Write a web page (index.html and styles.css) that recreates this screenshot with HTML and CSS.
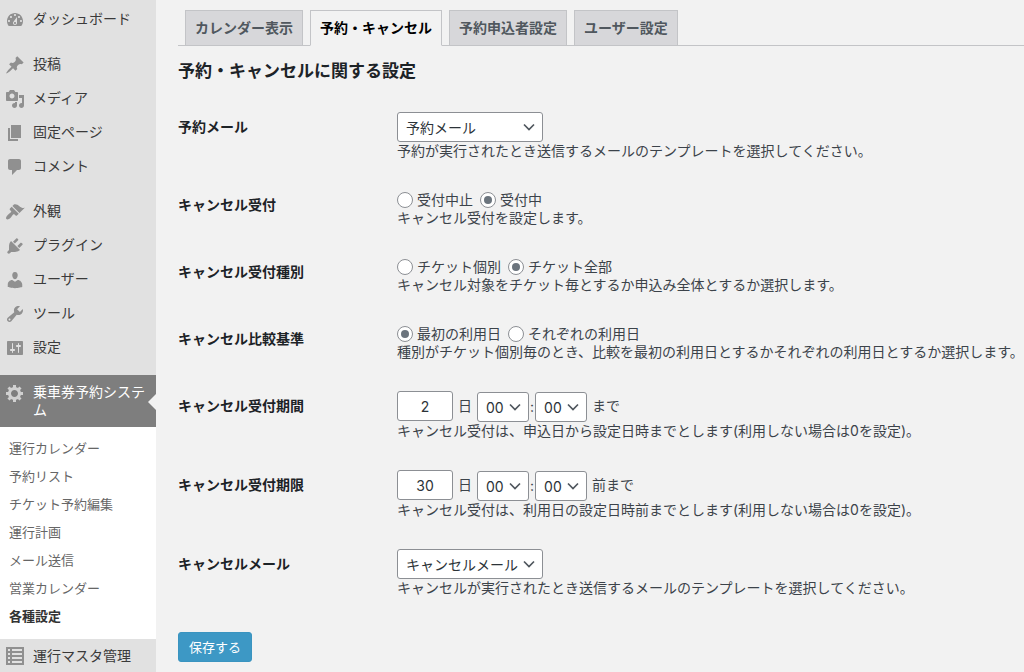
FILE: index.html
```
<!DOCTYPE html>
<html lang="ja">
<head>
    <meta charset="UTF-8">
    <title>各種設定</title>
    <link rel="stylesheet" href="styles.css">
</head>
<body>
    <div class="wrap">
        <nav class="sidebar">
            <ul class="menu">
                <li>
                    <a class="menu_link" href="#"><svg class="icon" viewBox="0 0 20 20"><path fill-rule="evenodd" d="M3.76 16h12.48c1.1-1.37 1.76-3.11 1.76-5 0-4.42-3.58-8-8-8s-8 3.58-8 8c0 1.89.66 3.63 1.76 5zM10 4c.55 0 1 .45 1 1s-.45 1-1 1-1-.45-1-1 .45-1 1-1zM6 6c.55 0 1 .45 1 1s-.45 1-1 1-1-.45-1-1 .45-1 1-1zm8 0c.55 0 1 .45 1 1s-.45 1-1 1-1-.45-1-1 .45-1 1-1zm-5.37 5.55L12 7v6c0 1.1-.9 2-2 2s-2-.9-2-2c0-.57.24-1.08.63-1.45zM4 10c.55 0 1 .45 1 1s-.45 1-1 1-1-.45-1-1 .45-1 1-1zm12 0c.55 0 1 .45 1 1s-.45 1-1 1-1-.45-1-1 .45-1 1-1zm-5 3c0-.55-.45-1-1-1s-1 .45-1 1 .45 1 1 1 1-.45 1-1z"/></svg>ダッシュボード</a>
                </li>
                <li class="group">
                    <a class="menu_link" href="#"><svg class="icon" viewBox="0 0 20 20"><path d="M10.44 3.02l1.82-1.82 6.36 6.35-1.83 1.82c-1.05-.68-2.48-.57-3.41.36l-.75.75c-.92.93-1.04 2.35-.35 3.41l-1.83 1.82-2.41-2.41-2.8 2.79c-.42.42-3.38 2.71-3.8 2.29s1.86-3.39 2.28-3.81l2.79-2.79L4.1 9.36l1.83-1.82c1.05.69 2.48.57 3.4-.36l.75-.75c.93-.92 1.05-2.35.36-3.41z"/></svg>投稿</a>
                </li>
                <li>
                    <a class="menu_link" href="#"><svg class="icon" viewBox="0 0 20 20"><path fill-rule="evenodd" d="M13 11V4c0-.55-.45-1-1-1h-1.67L9 1H5L3.67 3H2c-.55 0-1 .45-1 1v7c0 .55.45 1 1 1h10c.55 0 1-.45 1-1zM7 4.5c1.38 0 2.5 1.12 2.5 2.5S8.38 9.5 7 9.5 4.5 8.38 4.5 7 5.62 4.5 7 4.5zM14 6h5v10.5c0 1.38-1.12 2.5-2.5 2.5S14 17.88 14 16.5s1.12-2.5 2.5-2.5c.17 0 .34.02.5.05V9h-3V6zm-4 8.05V13h2v3.5c0 1.38-1.12 2.5-2.5 2.5S7 17.88 7 16.5 8.12 14 9.5 14c.17 0 .34.02.5.05z"/></svg>メディア</a>
                </li>
                <li>
                    <a class="menu_link" href="#"><svg class="icon" viewBox="0 0 20 20"><path d="M6 15V2h10v13H6zm-1 1h8v2H3V5h2v11z"/></svg>固定ページ</a>
                </li>
                <li>
                    <a class="menu_link" href="#"><svg class="icon" viewBox="0 0 20 20"><path d="M5 2h9c1.1 0 2 .9 2 2v7c0 1.1-.9 2-2 2h-2l-5 5v-5H5c-1.1 0-2-.9-2-2V4c0-1.1.9-2 2-2z"/></svg>コメント</a>
                </li>
                <li class="group">
                    <a class="menu_link" href="#"><svg class="icon" viewBox="0 0 20 20"><path d="M14.48 11.06L7.41 3.99l1.5-1.5c.5-.56 2.3-.47 3.51.32 1.21.8 1.43 1.28 2.91 2.1 1.18.64 2.45 1.26 4.45.85zm-.71.71L6.7 4.7 4.93 6.47c-.39.39-.39 1.02 0 1.41l1.06 1.06c.39.39.39 1.03 0 1.42-.6.6-1.43 1.11-2.21 1.69-.35.26-.7.53-1.01.84C1.43 14.23.4 16.08 1.4 17.07c.99 1 2.84-.03 4.18-1.36.31-.31.58-.66.85-1.02.57-.78 1.08-1.61 1.69-2.21.39-.39 1.02-.39 1.41 0l1.06 1.06c.39.39 1.02.39 1.41 0z"/></svg>外観</a>
                </li>
                <li>
                    <a class="menu_link" href="#"><svg class="icon" viewBox="0 0 20 20"><path d="M13.11 4.36L9.87 7.6 8 5.73l3.24-3.24c.35-.34 1.05-.2 1.56.32.52.51.66 1.21.31 1.55zm-8 1.77l.91-1.12 9.01 9.01-1.19.84c-.71.71-2.63 1.16-3.82 1.16H6.14L4.9 17.26c-.59.59-1.54.59-2.12 0-.59-.58-.59-1.53 0-2.12l1.24-1.24v-3.88c0-1.13.4-3.19 1.09-3.89zm7.26 3.97l3.24-3.24c.34-.35 1.04-.21 1.55.31.52.51.66 1.21.31 1.55l-3.24 3.25z"/></svg>プラグイン</a>
                </li>
                <li>
                    <a class="menu_link" href="#"><svg class="icon" viewBox="0 0 20 20"><path d="M10 9.25c-2.27 0-2.73-3.44-2.73-3.44C7 4.02 7.82 2 9.97 2c2.16 0 2.98 2.02 2.71 3.81 0 0-.41 3.44-2.68 3.44zm0 2.57L12.72 10c2.39 0 4.52 2.33 4.52 4.53v2.49s-3.65 1.13-7.24 1.13c-3.65 0-7.24-1.13-7.24-1.13v-2.49c0-2.25 1.94-4.48 4.47-4.48z"/></svg>ユーザー</a>
                </li>
                <li>
                    <a class="menu_link" href="#"><svg class="icon" viewBox="0 0 20 20"><path fill-rule="evenodd" d="M16.68 9.77c-1.34 1.34-3.3 1.67-4.95.99l-5.41 6.52c-.99.99-2.59.99-3.58 0s-.99-2.59 0-3.57l6.52-5.42c-.68-1.65-.35-3.61.99-4.95 1.28-1.28 3.12-1.62 4.72-1.06l-2.89 2.89 2.82 2.82 2.86-2.87c.53 1.58.18 3.39-1.08 4.65zM3.81 16.21c.4.39 1.04.39 1.43 0 .4-.4.4-1.04 0-1.43-.39-.4-1.03-.4-1.43 0-.39.39-.39 1.03 0 1.43z"/></svg>ツール</a>
                </li>
                <li>
                    <a class="menu_link" href="#"><svg class="icon" viewBox="0 0 20 20"><path fill-rule="evenodd" d="M18 16V4c0-.55-.45-1-1-1H3c-.55 0-1 .45-1 1v12c0 .55.45 1 1 1h14c.55 0 1-.45 1-1zM8 11h1c.55 0 1 .45 1 1s-.45 1-1 1H8v1.5c0 .28-.22.5-.5.5s-.5-.22-.5-.5V13H6c-.55 0-1-.45-1-1s.45-1 1-1h1V5.5c0-.28.22-.5.5-.5s.5.22.5.5V11zm5-2h-1c-.55 0-1-.45-1-1s.45-1 1-1h1V5.5c0-.28.22-.5.5-.5s.5.22.5.5V7h1c.55 0 1 .45 1 1s-.45 1-1 1h-1v5.5c0 .28-.22.5-.5.5s-.5-.22-.5-.5V9z"/></svg>設定</a>
                </li>
                <li class="group">
                    <a class="menu_link current" href="#"><svg class="icon" viewBox="0 0 20 20"><path fill-rule="evenodd" d="M18 12h-2.18c-.17.7-.44 1.35-.81 1.93l1.54 1.54-2.1 2.1-1.54-1.54c-.58.36-1.23.63-1.91.79V19H8v-2.18c-.68-.16-1.33-.43-1.91-.79l-1.54 1.54-2.12-2.12 1.54-1.54c-.36-.58-.63-1.23-.79-1.91H1V9.03h2.17c.16-.7.44-1.35.8-1.94L2.43 5.55l2.1-2.1 1.54 1.54c.58-.37 1.24-.64 1.93-.81V2h3v2.18c.68.16 1.33.43 1.91.79l1.54-1.54 2.12 2.12-1.54 1.54c.36.59.64 1.24.8 1.94H18V12zm-8.5 2c1.93 0 3.5-1.57 3.5-3.5S11.43 7 9.5 7 6 8.57 6 10.5 7.57 14 9.5 14z"/></svg>乗車券予約システム</a>
                    <ul class="submenu">
                        <li><a href="#">運行カレンダー</a></li>
                        <li><a href="#">予約リスト</a></li>
                        <li><a href="#">チケット予約編集</a></li>
                        <li><a href="#">運行計画</a></li>
                        <li><a href="#">メール送信</a></li>
                        <li><a href="#">営業カレンダー</a></li>
                        <li><a class="active" href="#">各種設定</a></li>
                    </ul>
                </li>
                <li>
                    <a class="menu_link" href="#"><svg class="icon" viewBox="0 0 20 20"><path fill-rule="evenodd" d="M1 0h18v18H1zM3 2v2h2V2zM7 2v2h10V2zM3 6v2h2V6zM7 6v2h10V6zM3 10v2h2v-2zM7 10v2h10v-2zM3 14v2h2v-2zM7 14v2h10v-2z"/></svg>運行マスタ管理</a>
                </li>
            </ul>
        </nav>
        <main class="content">
            <nav class="tabs">
                <a class="tab" href="#">カレンダー表示</a>
                <a class="tab active" href="#">予約・キャンセル</a>
                <a class="tab" href="#">予約申込者設定</a>
                <a class="tab" href="#">ユーザー設定</a>
            </nav>
            <h1 class="title">予約・キャンセルに関する設定</h1>
            <form>
                <div class="row">
                    <label class="name" for="mail">予約メール</label>
                    <div class="field">
                        <select class="select mail" id="mail"><option>予約メール</option></select>
                        <p class="desc">予約が実行されたとき送信するメールのテンプレートを選択してください。</p>
                    </div>
                </div>
                <div class="row" role="radiogroup" aria-labelledby="accept">
                    <span class="name" id="accept">キャンセル受付</span>
                    <div class="field">
                        <div class="radios">
                            <label class="choice"><input class="radio" type="radio" name="accept">受付中止</label>
                            <label class="choice"><input class="radio" type="radio" name="accept" checked>受付中</label>
                        </div>
                        <p class="desc">キャンセル受付を設定します。</p>
                    </div>
                </div>
                <div class="row" role="radiogroup" aria-labelledby="kind">
                    <span class="name" id="kind">キャンセル受付種別</span>
                    <div class="field">
                        <div class="radios">
                            <label class="choice"><input class="radio" type="radio" name="kind">チケット個別</label>
                            <label class="choice"><input class="radio" type="radio" name="kind" checked>チケット全部</label>
                        </div>
                        <p class="desc">キャンセル対象をチケット毎とするか申込み全体とするか選択します。</p>
                    </div>
                </div>
                <div class="row" role="radiogroup" aria-labelledby="base">
                    <span class="name" id="base">キャンセル比較基準</span>
                    <div class="field">
                        <div class="radios">
                            <label class="choice"><input class="radio" type="radio" name="base" checked>最初の利用日</label>
                            <label class="choice"><input class="radio" type="radio" name="base">それぞれの利用日</label>
                        </div>
                        <p class="desc">種別がチケット個別毎のとき、比較を最初の利用日とするかそれぞれの利用日とするか選択します。</p>
                    </div>
                </div>
                <div class="row">
                    <label class="name" for="period">キャンセル受付期間</label>
                    <div class="field">
                        <div class="limit">
                            <input class="days" type="text" id="period" value="2">
                            <label class="unit" for="period">日</label>
                            <div class="time">
                                <select class="select" aria-label="時"><option>00</option></select>
                                <span class="unit">:</span>
                                <select class="select" aria-label="分"><option>00</option></select>
                            </div>
                            <span class="unit">まで</span>
                        </div>
                        <p class="desc">キャンセル受付は、申込日から設定日時までとします(利用しない場合は0を設定)。</p>
                    </div>
                </div>
                <div class="row">
                    <label class="name" for="deadline">キャンセル受付期限</label>
                    <div class="field">
                        <div class="limit">
                            <input class="days" type="text" id="deadline" value="30">
                            <label class="unit" for="deadline">日</label>
                            <div class="time">
                                <select class="select" aria-label="時"><option>00</option></select>
                                <span class="unit">:</span>
                                <select class="select" aria-label="分"><option>00</option></select>
                            </div>
                            <span class="unit">前まで</span>
                        </div>
                        <p class="desc">キャンセル受付は、利用日の設定日時前までとします(利用しない場合は0を設定)。</p>
                    </div>
                </div>
                <div class="row">
                    <label class="name" for="cancel_mail">キャンセルメール</label>
                    <div class="field">
                        <select class="select mail" id="cancel_mail"><option>キャンセルメール</option></select>
                        <p class="desc">キャンセルが実行されたとき送信するメールのテンプレートを選択してください。</p>
                    </div>
                </div>
                <button class="btn" type="submit">保存する</button>
            </form>
        </main>
    </div>
</body>
</html>
```

FILE: styles.css
```
*{
    box-sizing: border-box;
}
body{
    margin: 0;
    background-color: #f2f2f2;
    color: #3c434a;
    font-family: Inter, "Noto Sans CJK JP", sans-serif;
    font-size: 14px;
    line-height: 19px;
}
a{
    color: inherit;
    text-decoration: none;
}
ul{
    list-style: none;
    margin: 0;
    padding: 0;
}
.wrap{
    display: flex;
    height: 100vh;
    overflow: hidden;
}
/*左メニュー*/
.sidebar{
    flex: 0 0 156px;
    padding-top: 2px;
    background-color: #e1e1e1;
}
.group{
    margin-top: 11px;
}
.menu_link{
    display: flex;
    align-items: flex-start;
    gap: 8px;
    padding: 8px 10px 8px 5px;
    line-height: 18px;
    color: #3a3a3a;
}
.icon{
    flex: none;
    width: 20px;
    height: 20px;
    margin-bottom: -2px;
    fill: #909090;
}
.menu_link.current{
    position: relative;
    background-color: #7e7e7e;
    color: #fff;
}
.menu_link.current .icon{
    fill: #d0d0d0;
}
/*選択中の三角*/
.menu_link.current::after{
    content: "";
    position: absolute;
    top: 19px;
    right: 0;
    border: 8px solid transparent;
    border-left: none;
    border-right-color: #f2f2f2;
}
.submenu{
    padding: 7px 9px 9px;
    background-color: #fff;
    color: #666;
    font-size: 13px;
    line-height: 28px;
}
.submenu a{
    display: block;
}
.submenu .active{
    color: #333;
    font-weight: bold;
}
/*設定画面*/
.content{
    flex: 1;
    min-width: 0;
    padding: 10px 0 0 22px;
}
.tabs{
    display: flex;
    gap: 7px;
    padding-left: 7px;
    border-bottom: 1px solid #c3c4c7;
}
.tab{
    margin-bottom: -1px;
    padding: 5px 9px;
    border: 1px solid #c3c4c7;
    background-color: #d7d7da;
    color: #50575e;
    font-weight: bold;
    line-height: 24px;
}
.tab.active{
    border-bottom-color: #f2f2f2;
    background-color: #f2f2f2;
    color: #000;
}
.title{
    margin: 13px 0 19px;
    color: #1d2327;
    font-size: 17px;
    line-height: 24px;
}
.row{
    display: grid;
    grid-template-columns: 219px 1fr;
    padding: 10px 0 20px;
}
.name{
    padding-top: 5px;
    color: #1d2327;
    font-weight: bold;
}
.desc{
    margin: 0;
    line-height: 18px;
    white-space: nowrap;
}
.select{
    display: block;
    width: 52px;
    height: 30px;
    padding: 0 20px 0 8px;
    border: 1px solid #8c8f94;
    border-radius: 3px;
    appearance: none;
    background: #fff url("data:image/svg+xml,%3Csvg xmlns='http://www.w3.org/2000/svg' viewBox='0 0 12 8'%3E%3Cpath d='M1 1.500l5 5 5-5' fill='none' stroke='%2350575e' stroke-width='1.700'/%3E%3C/svg%3E") no-repeat right 7px center / 12px 8px;
    color: #2c3338;
    font: inherit;
}
.mail{
    width: 146px;
}
.radios{
    display: flex;
    gap: 7px;
}
.choice{
    display: flex;
    align-items: center;
    gap: 4px;
}
.radio{
    display: grid;
    place-content: center;
    width: 16px;
    height: 16px;
    margin: 0;
    border: 1px solid #8c8f94;
    border-radius: 50%;
    appearance: none;
    background-color: #fff;
}
.radio:checked::before{
    content: "";
    width: 8px;
    height: 8px;
    border-radius: 50%;
    background-color: #6b747d;
}
.limit{
    display: flex;
    gap: 5px;
    height: 31px;
}
.days{
    width: 56px;
    height: 30px;
    padding: 0 8px;
    border: 1px solid #8c8f94;
    border-radius: 3px;
    background-color: #fff;
    color: #2c3338;
    font: inherit;
    text-align: center;
}
.time{
    display: flex;
    align-items: flex-end;
    gap: 1px;
}
.unit{
    line-height: 30px;
}
.btn{
    margin-top: 15px;
    padding: 0 10px;
    border: 1px solid #3a94c0;
    border-radius: 3px;
    background-color: #3d98c5;
    color: #fff;
    font: inherit;
    font-size: 13px;
    line-height: 28px;
}
```
